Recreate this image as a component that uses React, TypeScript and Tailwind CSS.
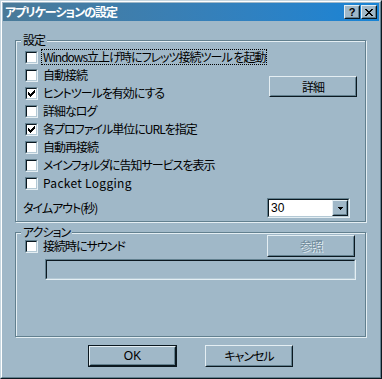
import React from "react";

const rows: { label: string; checked?: boolean; focus?: boolean; latin?: boolean }[] = [
  { label: "Windows立上げ時にフレッツ接続ツール を起動", focus: true },
  { label: "自動接続" },
  { label: "ヒントツールを有効にする", checked: true },
  { label: "詳細なログ" },
  { label: "各プロファイル単位にURLを指定", checked: true },
  { label: "自動再接続" },
  { label: "メインフォルダに告知サービスを表示" },
  { label: "Packet Logging", latin: true },
];

const checkPixels = [
  [6, 0], [5, 1], [6, 1], [0, 2], [4, 2], [5, 2], [6, 2],
  [0, 3], [1, 3], [3, 3], [4, 3], [5, 3],
  [0, 4], [1, 4], [2, 4], [3, 4], [4, 4],
  [1, 5], [2, 5], [3, 5], [2, 6],
];

function Check({ checked }: { checked?: boolean }) {
  return (
    <span className="block w-[13px] h-[13px] shrink-0 border border-t-[#62808f] border-l-[#62808f] border-r-[#e4eef3] border-b-[#e4eef3]">
      <span className="flex w-full h-full bg-white border border-t-[#0b1820] border-l-[#0b1820] border-r-[#b4c9d5] border-b-[#b4c9d5] p-[1px]">
        {checked && (
          <svg width="7" height="7" viewBox="0 0 7 7" shapeRendering="crispEdges">
            {checkPixels.map(([x, y]) => (
              <rect key={`${x}-${y}`} x={x} y={y} width="1" height="1" fill="#000" />
            ))}
          </svg>
        )}
      </span>
    </span>
  );
}

function Btn({
  children,
  className = "",
  def,
  disabled,
}: {
  children: React.ReactNode;
  className?: string;
  def?: boolean;
  disabled?: boolean;
}) {
  const inner = (
    <div className="w-full h-full border border-t-[#e4eef3] border-l-[#e4eef3] border-r-[#0b1820] border-b-[#0b1820]">
      <div
        className={`w-full h-full flex items-center justify-center border border-t-transparent border-l-transparent border-r-[#62808f] border-b-[#62808f] ${
          disabled ? "text-[#6f8a9a] [text-shadow:1px_1px_0_#e4eef3]" : "text-black"
        }`}
      >
        {children}
      </div>
    </div>
  );
  if (def) {
    return <div className={`border border-[#0b1820] ${className}`}>{inner}</div>;
  }
  return <div className={className}>{inner}</div>;
}

function Group({
  title,
  className = "",
  children,
}: {
  title: string;
  className?: string;
  children: React.ReactNode;
}) {
  return (
    <div
      className={`flex flex-col border border-[#62808f] shadow-[inset_1px_1px_0_#e4eef3,1px_1px_0_#e4eef3] ${className}`}
    >
      <span className="-mt-[8px] ml-[5px] self-start px-[2px] bg-[#a0b8c8] leading-[14px]">
        {title}
      </span>
      {children}
    </div>
  );
}

export default function App() {
  return (
    <div className="w-[382px] h-[379px] border border-t-[#c6d6e0] border-l-[#c6d6e0] border-r-[#0b1820] border-b-[#0b1820] bg-[#a0b8c8] font-['Noto_Sans_CJK_JP',sans-serif] text-[12px] tracking-[-1px] text-black [font-feature-settings:'palt']">
      <div className="h-full flex flex-col p-px border border-t-white border-l-white border-r-[#62808f] border-b-[#62808f]">
        <div className="h-[18px] shrink-0 flex items-center bg-gradient-to-r from-[#4a7a98] to-[#1784d6] pl-[2px] pr-[2px]">
          <span className="flex-1 text-white font-bold leading-[18px]">
            アプリケーションの設定
          </span>
          <div className="flex gap-[1px]">
            <div className="w-[16px] h-[14px] border border-t-[#e4eef3] border-l-[#e4eef3] border-r-[#0b1820] border-b-[#0b1820] bg-[#a0b8c8]">
              <div className="w-full h-full flex items-center justify-center border border-t-transparent border-l-transparent border-r-[#62808f] border-b-[#62808f] font-['Liberation_Sans',sans-serif] font-bold text-[11px] tracking-normal leading-none">
                ?
              </div>
            </div>
            <div className="w-[16px] h-[14px] border border-t-[#e4eef3] border-l-[#e4eef3] border-r-[#0b1820] border-b-[#0b1820] bg-[#a0b8c8]">
              <div className="w-full h-full flex items-center justify-center border border-t-transparent border-l-transparent border-r-[#62808f] border-b-[#62808f]">
                <svg width="8" height="7" viewBox="0 0 8 7" shapeRendering="crispEdges">
                  <path d="M0 0h2v1H0zM6 0h2v1H6zM1 1h2v1H1zM5 1h2v1H5zM2 2h4v1H2zM3 3h2v1H3zM2 4h4v1H2zM1 5h2v1H1zM5 5h2v1H5zM0 6h2v1H0zM6 6h2v1H6z" fill="#000" />
                </svg>
              </div>
            </div>
          </div>
        </div>

        <div className="flex flex-col ml-[12px] w-[351px]">
          <Group title="設定" className="mt-[19px] h-[182px]">
            <div className="flex mt-[1px]">
              <div className="flex flex-col flex-1 min-w-0 pl-[9px]">
                {rows.map((r) => (
                  <div key={r.label} className="h-[18px] flex items-center">
                    <Check checked={r.checked} />
                    <span
                      className={`ml-[3px] px-[1px] leading-[14px] whitespace-nowrap border border-dotted ${
                        r.focus ? "border-black" : "border-transparent"
                      } ${r.latin ? "tracking-[0.3px]" : ""}`}
                    >
                      {r.label}
                    </span>
                  </div>
                ))}
              </div>
              <Btn className="w-[88px] h-[21px] mt-[28px] mr-[8px] shrink-0">詳細</Btn>
            </div>
            <div className="flex items-center mt-[6px] h-[20px] pl-[7px]">
              <span className="flex-1">タイムアウト(秒)</span>
              <div className="w-[83px] h-[20px] mr-[15px] flex border border-t-[#62808f] border-l-[#62808f] border-r-[#e4eef3] border-b-[#e4eef3]">
                <div className="flex-1 flex border border-t-[#0b1820] border-l-[#0b1820] border-r-[#b4c9d5] border-b-[#b4c9d5] bg-white">
                  <span className="flex-1 pl-[2px] leading-[16px] tracking-normal font-['Liberation_Sans',sans-serif]">30</span>
                  <div className="w-[16px] h-[16px] border border-t-[#e4eef3] border-l-[#e4eef3] border-r-[#0b1820] border-b-[#0b1820] bg-[#a0b8c8]">
                    <div className="w-full h-full flex items-center justify-center border border-t-transparent border-l-transparent border-r-[#62808f] border-b-[#62808f]">
                      <svg width="5" height="3" viewBox="0 0 5 3" shapeRendering="crispEdges">
                        <path d="M0 0h5v1H0zM1 1h3v1H1zM2 2h1v1H2z" fill="#000" />
                      </svg>
                    </div>
                  </div>
                </div>
              </div>
            </div>
          </Group>

          <Group title="アクション" className="mt-[10px] h-[105px]">
            <div className="flex items-start">
              <div className="flex-1 flex items-center h-[14px] pl-[9px]">
                <Check />
                <span className="ml-[4px] px-[1px] leading-[14px]">接続時にサウンド</span>
              </div>
              <Btn disabled className="w-[88px] h-[22px] -mt-[4px] mr-[10px]">
                参照
              </Btn>
            </div>
            <div className="mt-[2px] ml-[29px] w-[311px] h-[21px] border border-t-[#62808f] border-l-[#62808f] border-r-[#e4eef3] border-b-[#e4eef3]">
              <div className="w-full h-full border border-t-[#0b1820] border-l-[#0b1820] border-r-[#b4c9d5] border-b-[#b4c9d5]" />
            </div>
          </Group>
        </div>

        <div className="flex mt-[8px] ml-[85px] gap-[28px]">
          <Btn def className="w-[89px] h-[22px] tracking-normal font-['Liberation_Sans',sans-serif]">
            OK
          </Btn>
          <Btn className="w-[88px] h-[22px]">キャンセル</Btn>
        </div>
      </div>
    </div>
  );
}
